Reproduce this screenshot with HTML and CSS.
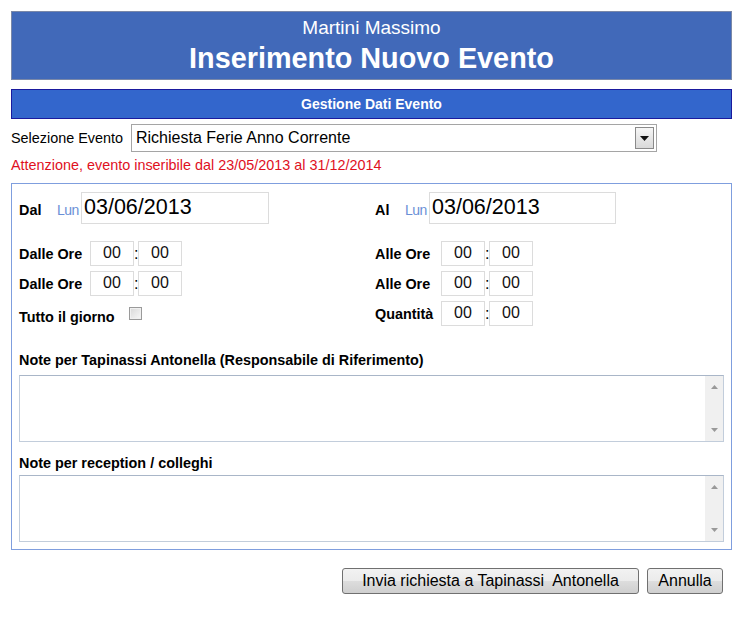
FILE: index.html
```html
<!DOCTYPE html>
<html lang="it">
<head>
<meta charset="utf-8">
<title>Inserimento Nuovo Evento</title>
<link rel="stylesheet" href="styles.css">
</head>
<body>
<div class="page">
  <div class="header">
    <div class="user">Martini Massimo</div>
    <div class="title">Inserimento Nuovo Evento</div>
  </div>
  <div class="bar">Gestione Dati Evento</div>

  <div class="sel-row">
    <span class="sel-label">Selezione Evento</span>
    <div class="select">
      <span class="select-text">Richiesta Ferie Anno Corrente</span>
      <span class="select-btn"><svg width="9" height="5" viewBox="0 0 9 5"><path d="M0 0H9L4.5 5Z" fill="#111"/></svg></span>
    </div>
  </div>
  <div class="warn">Attenzione, evento inseribile dal 23/05/2013 al 31/12/2014</div>

  <div class="box">
    <div class="cols">
      <div class="col">
        <div class="date-row">
          <span class="lbl date-lbl">Dal</span>
          <span class="day">Lun</span>
          <span class="date-in">03/06/2013</span>
        </div>
        <div class="time-row first">
          <span class="lbl time-lbl">Dalle Ore</span>
          <span class="tin">00</span><span class="colon">:</span><span class="tin">00</span>
        </div>
        <div class="time-row">
          <span class="lbl time-lbl">Dalle Ore</span>
          <span class="tin">00</span><span class="colon">:</span><span class="tin">00</span>
        </div>
        <div class="time-row check-row">
          <span class="lbl">Tutto il giorno</span>
          <span class="checkbox"></span>
        </div>
      </div>
      <div class="col right">
        <div class="date-row">
          <span class="lbl date-lbl al">Al</span>
          <span class="day">Lun</span>
          <span class="date-in">03/06/2013</span>
        </div>
        <div class="time-row first">
          <span class="lbl time-lbl r">Alle Ore</span>
          <span class="tin">00</span><span class="colon">:</span><span class="tin">00</span>
        </div>
        <div class="time-row">
          <span class="lbl time-lbl r">Alle Ore</span>
          <span class="tin">00</span><span class="colon">:</span><span class="tin">00</span>
        </div>
        <div class="time-row">
          <span class="lbl time-lbl r">Quantità</span>
          <span class="tin">00</span><span class="colon">:</span><span class="tin">00</span>
        </div>
      </div>
    </div>

    <div class="note-lbl lbl first-note">Note per Tapinassi Antonella (Responsabile di Riferimento)</div>
    <div class="ta">
      <div class="ta-body"></div>
      <div class="ta-scroll">
        <svg width="7" height="4" viewBox="0 0 7 4"><path d="M0 4L3.5 0L7 4Z" fill="#999"/></svg>
        <svg width="7" height="4" viewBox="0 0 7 4"><path d="M0 0H7L3.5 4Z" fill="#999"/></svg>
      </div>
    </div>
    <div class="note-lbl lbl second-note">Note per reception / colleghi</div>
    <div class="ta ta2">
      <div class="ta-body"></div>
      <div class="ta-scroll">
        <svg width="7" height="4" viewBox="0 0 7 4"><path d="M0 4L3.5 0L7 4Z" fill="#999"/></svg>
        <svg width="7" height="4" viewBox="0 0 7 4"><path d="M0 0H7L3.5 4Z" fill="#999"/></svg>
      </div>
    </div>
  </div>

  <div class="actions">
    <button class="btn send">Invia richiesta a Tapinassi&nbsp; Antonella</button>
    <button class="btn cancel">Annulla</button>
  </div>
</div>
</body>
</html>
```

FILE: styles.css
```css
* { box-sizing: border-box; }
html, body { margin: 0; padding: 0; background: #fff; }
body { font-family: "Liberation Sans", Arial, sans-serif; color: #000; }

.page { width: 733px; padding: 11px 1px 0 11px; }

.header {
  height: 69px;
  background: #4169b9;
  border: 1px solid #7a88a8;
  color: #fff;
  text-align: center;
  padding-top: 5px;
}
.user { font-size: 19px; line-height: 22px; }
.title { font-size: 28.8px; font-weight: bold; line-height: 38px; }

.bar {
  margin-top: 9px;
  height: 30px;
  background: #3366cc;
  border: 1px solid #1a1a9e;
  color: #fff;
  font-weight: bold;
  font-size: 14px;
  text-align: center;
  line-height: 28px;
}

.sel-row { display: flex; align-items: center; margin-top: 5px; height: 28px; }
.sel-label { font-size: 14.4px; width: 120px; }
.select {
  width: 526px;
  height: 28px;
  border: 1px solid #a5a5a5;
  display: flex;
  align-items: center;
  background: #fff;
}
.select-text { flex: 1; font-size: 16px; padding-left: 4px; }
.select-btn {
  width: 19px;
  height: 22px;
  margin-right: 2px;
  border: 1px solid #8a8a8a;
  background: linear-gradient(#f6f6f6, #d9d9d9);
  display: flex;
  align-items: center;
  justify-content: center;
}

.warn { color: #e0101e; font-size: 14.4px; margin-top: 5px; line-height: 16px; }

.box {
  margin-top: 10px;
  height: 367px;
  border: 1px solid #7f9ede;
  padding: 8px 8px 0 7px;
}
.cols { display: flex; }
.col { width: 356px; }
.col.right { width: auto; }

.lbl { font-size: 14.4px; font-weight: bold; }
.date-row { display: flex; align-items: center; height: 32px; }
.date-lbl { width: 38px; padding-top: 3px; }
.date-lbl.al { width: 30px; }
.day { color: #6a8fd6; font-size: 14px; width: 24px; padding-top: 3px; letter-spacing: -0.5px; }
.date-in {
  width: 188px;
  height: 32px;
  border: 1px solid #dcdcdc;
  font-size: 21.5px;
  line-height: 28px;
  padding-left: 2px;
}
.right .date-in { width: 187px; }

.time-row { display: flex; align-items: center; height: 25px; margin-top: 5px; }
.time-row.first { margin-top: 17px; }
.time-lbl { width: 71px; padding-top: 1px; }
.time-lbl.r { width: 66px; }
.tin {
  width: 44px;
  height: 25px;
  border: 1px solid #dcdcdc;
  font-size: 16px;
  text-align: center;
  line-height: 22px;
  color: #111;
}
.colon { width: 4px; font-size: 16px; text-align: center; line-height: 22px; }
.check-row { align-items: flex-start; height: 25px; }
.check-row .lbl { padding-top: 8px; }
.checkbox {
  width: 13px;
  height: 13px;
  margin-left: 14px;
  margin-top: 6px;
  border: 1px solid #9a9a9a;
  background: linear-gradient(135deg, #d8d8d8, #f8f8f8);
  box-shadow: inset 0 0 0 1px #f0f0f0;
}

.note-lbl { line-height: 16px; }
.first-note { margin-top: 26px; }
.second-note { margin-top: 13px; }
.ta {
  margin-top: 7px;
  width: 705px;
  height: 67px;
  border: 1px solid #c2cddb;
  border-top-color: #a9b6c8;
  display: flex;
}
.ta2 { margin-top: 4px; }
.ta-body { flex: 1; }
.ta-scroll {
  width: 18px;
  background: #f0f0f0;
  display: flex;
  flex-direction: column;
  justify-content: space-between;
  align-items: center;
  padding: 9px 0 9px;
}

.actions { display: flex; justify-content: flex-end; gap: 8px; margin-top: 18px; padding-right: 9px; }
.btn {
  font-family: "Liberation Sans", Arial, sans-serif;
  font-size: 16px;
  height: 26px;
  border: 1px solid #707070;
  border-radius: 3px;
  background: linear-gradient(#f2f2f2 0%, #ebebeb 50%, #dddddd 51%, #cfcfcf 100%);
  color: #000;
  padding: 0;
}
.send { width: 297px; }
.cancel { width: 76px; }
```
